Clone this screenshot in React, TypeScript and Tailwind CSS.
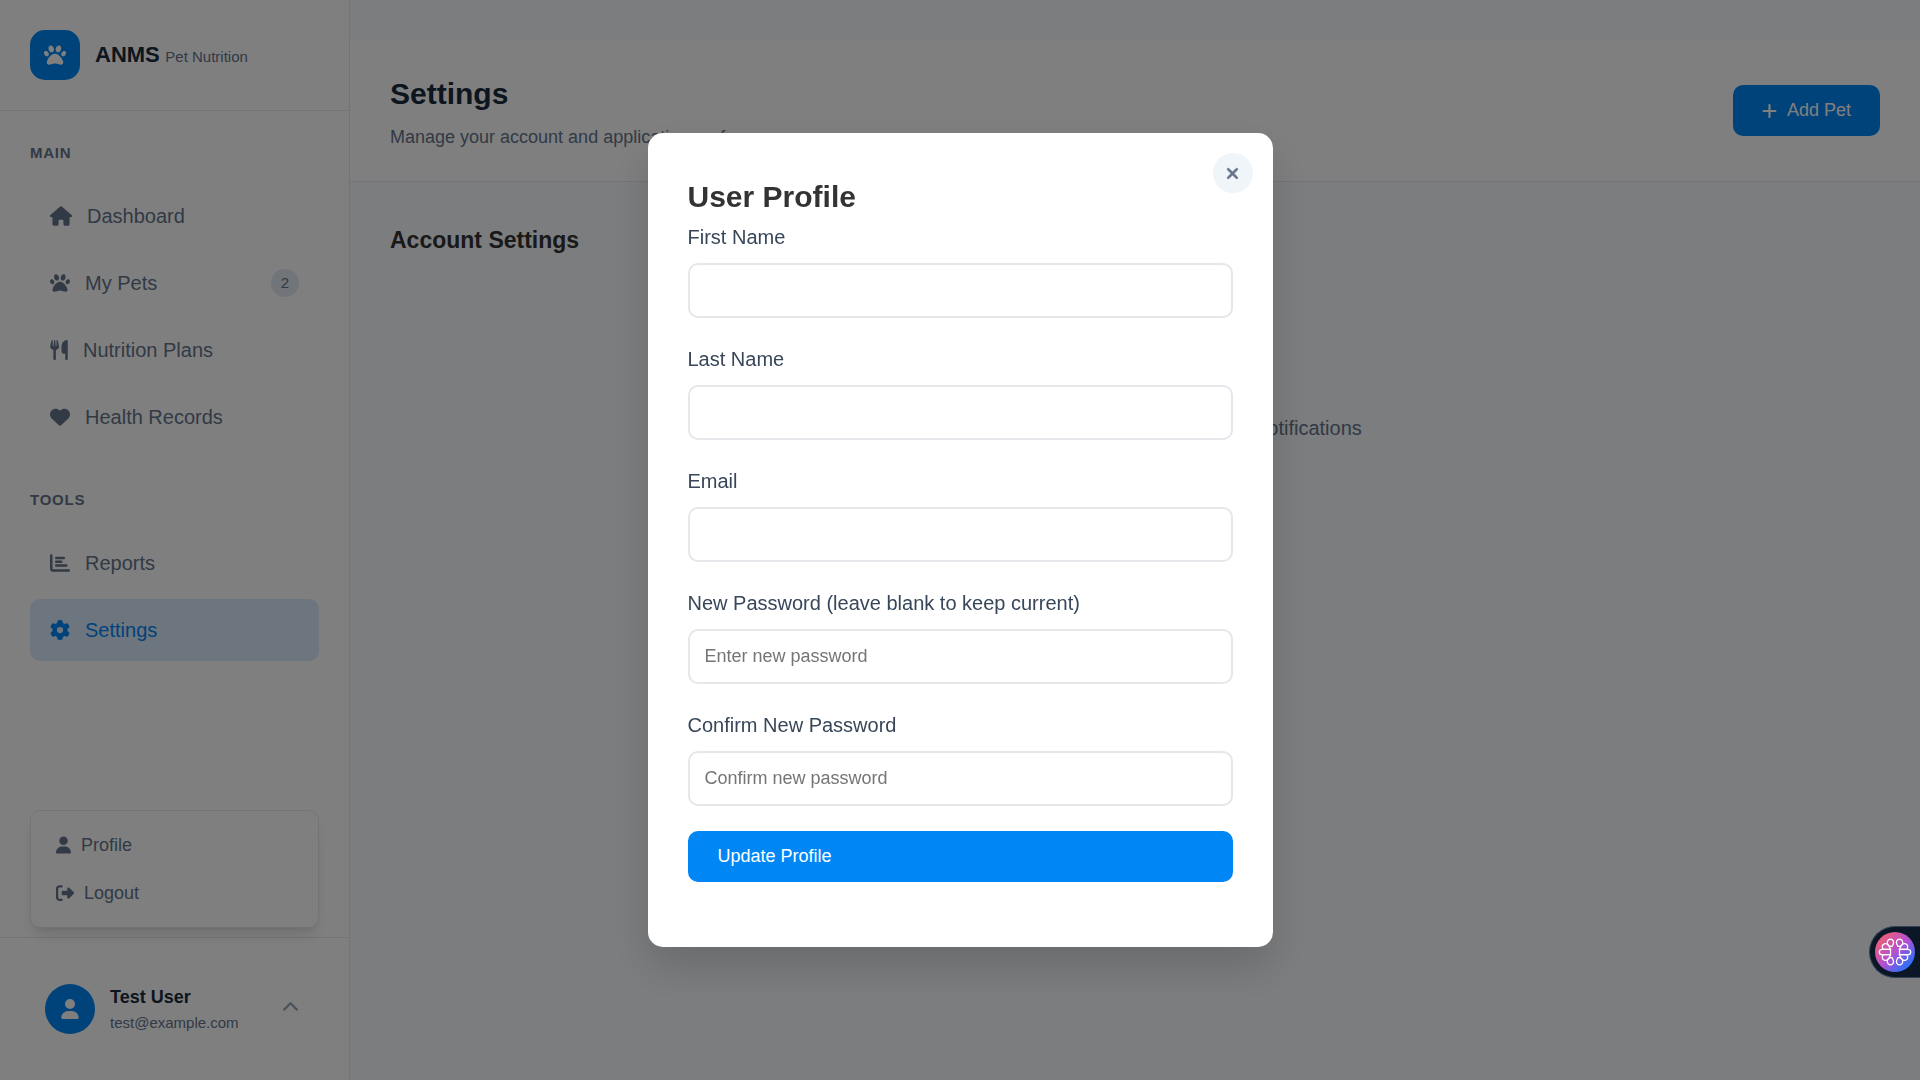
import React from "react";
import {
  FaChartBar,
  FaChevronUp,
  FaGear,
  FaHeart,
  FaHouse,
  FaPaw,
  FaPlus,
  FaRightFromBracket,
  FaUser,
  FaUtensils,
  FaXmark,
} from "react-icons/fa6";
import type { IconType } from "react-icons";

type NavItem = { label: string; icon: IconType; iconClass: string; badge?: number; active?: boolean };

const mainItems: NavItem[] = [
  { label: "Dashboard", icon: FaHouse, iconClass: "h-5 w-[22px] shrink-0" },
  { label: "My Pets", icon: FaPaw, iconClass: "size-5 shrink-0", badge: 2 },
  { label: "Nutrition Plans", icon: FaUtensils, iconClass: "h-5 w-[18px] shrink-0" },
  { label: "Health Records", icon: FaHeart, iconClass: "size-5 shrink-0" },
];

const toolItems: NavItem[] = [
  { label: "Reports", icon: FaChartBar, iconClass: "size-5 shrink-0" },
  { label: "Settings", icon: FaGear, iconClass: "size-5 shrink-0", active: true },
];

const fields = [
  { id: "first-name", label: "First Name", type: "text" },
  { id: "last-name", label: "Last Name", type: "text" },
  { id: "email", label: "Email", type: "email" },
  {
    id: "new-password",
    label: "New Password (leave blank to keep current)",
    type: "password",
    placeholder: "Enter new password",
  },
  {
    id: "confirm-password",
    label: "Confirm New Password",
    type: "password",
    placeholder: "Confirm new password",
  },
];

function NavSection({ title, items }: { title: string; items: NavItem[] }) {
  return (
    <section>
      <h2 className="mb-5 text-[15px] leading-6 font-bold tracking-wider text-[#64748b]">{title}</h2>
      <ul className="flex flex-col gap-[5px]">
        {items.map(({ label, icon: Icon, iconClass, badge, active }) => (
          <li key={label}>
            <a
              href="#"
              className={
                active
                  ? "flex items-center gap-[15px] rounded-[10px] bg-[#dbeafe] px-5 py-[15px] text-[#0086f5]"
                  : "flex items-center gap-[15px] rounded-[10px] px-5 py-[15px] text-[#64748b]"
              }
            >
              <Icon className={iconClass} />
              <span className="grow">{label}</span>
              {badge !== undefined && (
                <span className="flex size-7 items-center justify-center rounded-full bg-[#e2e8f0] text-[15px]">
                  {badge}
                </span>
              )}
            </a>
          </li>
        ))}
      </ul>
    </section>
  );
}

function Sidebar() {
  return (
    <aside className="flex w-[350px] shrink-0 flex-col border-r border-[#e2e8f0] bg-white">
      <div className="flex items-center gap-[15px] border-b border-[#e2e8f0] p-[30px]">
        <div className="flex size-[50px] items-center justify-center rounded-[15px] bg-[#0086f5] text-white">
          <FaPaw className="size-[22px]" />
        </div>
        <p className="text-[#1a2b3c]">
          <span className="text-[22px] font-bold">ANMS</span>{" "}
          <span className="text-[15px] text-[#64748b]">Pet Nutrition</span>
        </p>
      </div>

      <nav className="flex grow flex-col gap-10 px-[30px] pt-[30px]">
        <NavSection title="MAIN" items={mainItems} />
        <NavSection title="TOOLS" items={toolItems} />
      </nav>

      <div className="relative border-t border-[#e2e8f0] p-[30px]">
        <div className="absolute inset-x-[30px] bottom-full mb-[10px] rounded-[10px] border border-[#e2e8f0] bg-white p-[10px] text-[18px] text-[#64748b] shadow-lg">
          <a href="#" className="flex h-12 items-center gap-[10px] px-[15px]">
            <FaUser className="h-[18px] w-[15px]" />
            Profile
          </a>
          <a href="#" className="flex h-12 items-center gap-[10px] px-[15px]">
            <FaRightFromBracket className="size-[18px]" />
            Logout
          </a>
        </div>
        <button type="button" className="flex w-full items-center gap-[15px] py-[15px] pr-5 pl-[15px] text-left">
          <span className="flex size-[50px] items-center justify-center rounded-full bg-[#0086f5] text-white">
            <FaUser className="h-5 w-[18px]" />
          </span>
          <span className="flex grow flex-col">
            <span className="text-[18px] leading-7 font-bold text-[#1a2b3c]">Test User</span>
            <span className="text-[15px] leading-6 text-[#64748b]">test@example.com</span>
          </span>
          <FaChevronUp className="mb-1 size-[17px] text-[#94a3b8]" />
        </button>
      </div>
    </aside>
  );
}

function MainArea() {
  return (
    <main className="min-w-0 grow bg-[#f8fafc] pt-10">
      <header className="flex items-center justify-between border-b border-[#e2e8f0] bg-white px-10 py-[30px]">
        <div>
          <h1 className="mb-[5px] text-[30px] font-bold text-[#1a2b3c]">Settings</h1>
          <p className="text-[18px] leading-7 text-[#64748b]">Manage your account and application preferences</p>
        </div>
        <button
          type="button"
          className="flex h-[51px] items-center gap-[10px] rounded-[10px] bg-[#0086f5] px-[29px] text-[18px] text-white"
        >
          <FaPlus className="h-[18px] w-[15px]" />
          Add Pet
        </button>
      </header>
      <div className="p-10">
        <h2 className="text-[23px] font-bold text-[#333333]">Account Settings</h2>
        <p className="pt-[153px] text-center text-[#64748b]">Manage your account preferences and notifications</p>
      </div>
    </main>
  );
}

function ProfileDialog() {
  return (
    <div className="fixed inset-0 flex items-center justify-center bg-black/50">
      <div
        role="dialog"
        aria-modal="true"
        aria-labelledby="profile-title"
        className="relative w-full max-w-[625px] rounded-[15px] bg-white px-10 pt-10 pb-[65px] shadow-[0_20px_40px_rgba(0,0,0,0.15)]"
      >
        <button
          type="button"
          aria-label="Close"
          className="absolute top-5 right-5 flex size-10 items-center justify-center rounded-full bg-[#f0f5fa] text-[#64748b]"
        >
          <FaXmark className="size-[17px] stroke-current" strokeWidth={20} />
        </button>
        <h2 id="profile-title" className="text-[30px] font-bold text-[#333333]">
          User Profile
        </h2>
        <form className="flex flex-col gap-[25px]">
          {fields.map((field) => (
            <div key={field.id} className="flex flex-col gap-[10px]">
              <label htmlFor={field.id} className="text-[#374759]">
                {field.label}
              </label>
              <input
                id={field.id}
                type={field.type}
                placeholder={field.placeholder}
                className="h-[55px] w-full rounded-[10px] border-2 border-[#e5e7eb] bg-white px-[15px] text-[18px] placeholder:text-[#757575]"
              />
            </div>
          ))}
          <button
            type="button"
            className="h-[51px] w-full rounded-[10px] bg-[#0086f5] px-[30px] text-left text-[18px] text-white"
          >
            Update Profile
          </button>
        </form>
      </div>
    </div>
  );
}

function AssistantTab() {
  return (
    <button
      type="button"
      aria-label="Open assistant"
      className="fixed top-[926px] right-0 flex h-[52px] items-center rounded-l-full border border-r-0 border-[#334155] bg-[#0b1726] px-[5px]"
    >
      <svg viewBox="0 0 40 40" className="size-10" fill="none" stroke="white" strokeWidth="1.3">
        <defs>
          <linearGradient id="assistant-fill" x1="0" y1="0" x2="1" y2="1">
            <stop offset="0.1" stopColor="#f0606f" />
            <stop offset="0.5" stopColor="#b44fd0" />
            <stop offset="0.9" stopColor="#1677ff" />
          </linearGradient>
        </defs>
        <circle cx="20" cy="20" r="20" fill="url(#assistant-fill)" stroke="none" />
        <g id="petals">
          <path d="M15.500 17.300H7a2.700 2.700 0 0 0 0 5.400h8.500Z" />
          <path d="M15.500 17.300H8.500C6.500 15.500 7 12.500 9.300 11.800c2.500-.7 4.700 1.200 6.200 5.500Z" />
          <path d="M15.500 22.700H8.500C6.500 24.500 7 27.500 9.300 28.200c2.500.7 4.700-1.200 6.200-5.500Z" />
          <path d="M17 14.300c-3 .4-5.200-1.600-4.700-4.300.5-2.600 3.200-3.700 5-2.300 1.700 1.500 1.300 4.300-.3 6.600Z" />
          <path d="M17 25.700c-3-.4-5.200 1.600-4.700 4.300.5 2.600 3.200 3.700 5 2.300 1.700-1.500 1.300-4.300-.3-6.600Z" />
        </g>
        <use href="#petals" transform="matrix(-1 0 0 1 40 0)" />
      </svg>
    </button>
  );
}

export default function App() {
  return (
    <div className="flex min-h-screen font-['Liberation_Sans',sans-serif] text-xl leading-[1.6]">
      <Sidebar />
      <MainArea />
      <ProfileDialog />
      <AssistantTab />
    </div>
  );
}
